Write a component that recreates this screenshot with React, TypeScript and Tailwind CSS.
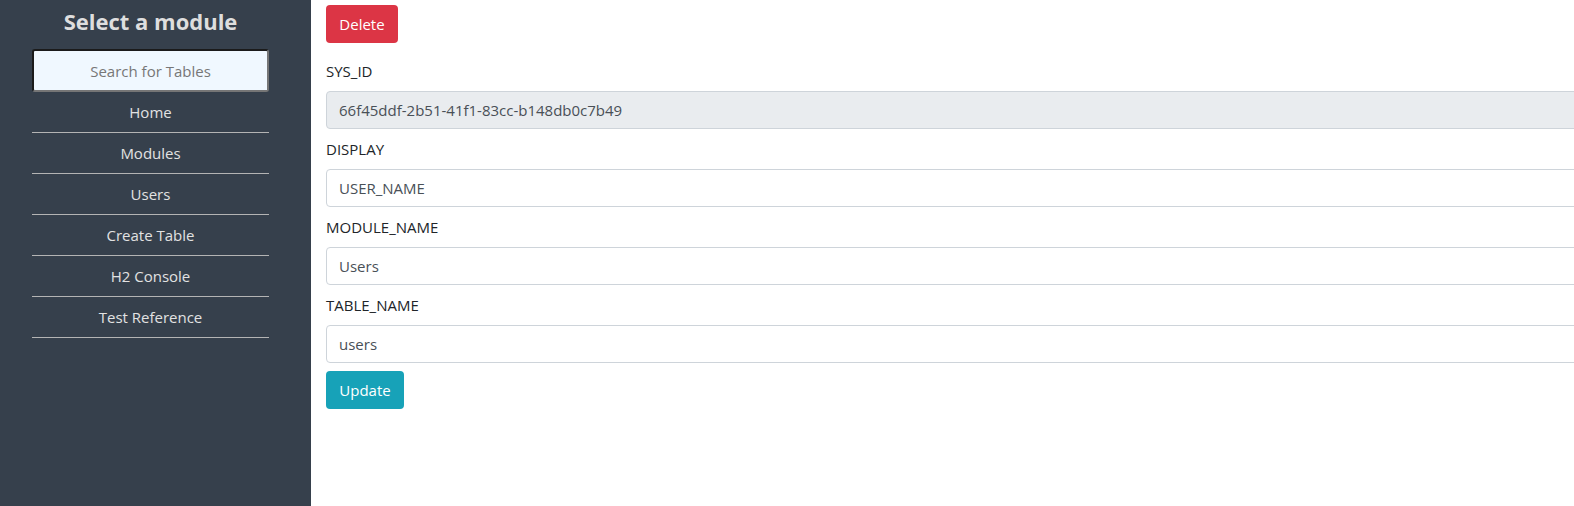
import React from "react";

const navItems = ["Home", "Modules", "Users", "Create Table", "H2 Console", "Test Reference"];

const fields: { label: string; value: string; disabled?: boolean }[] = [
  { label: "SYS_ID", value: "66f45ddf-2b51-41f1-83cc-b148db0c7b49", disabled: true },
  { label: "DISPLAY", value: "USER_NAME" },
  { label: "MODULE_NAME", value: "Users" },
  { label: "TABLE_NAME", value: "users" },
];

export default function App() {
  return (
    <div
      className="flex h-[506px] w-[1574px] overflow-hidden bg-white"
      style={{ fontFamily: '"Open Sans", "Noto Sans", Arial, sans-serif' }}
    >
      <aside className="flex h-full w-[311px] shrink-0 flex-col bg-[#36404c] pl-[32px] pt-[5px]">
        <div className="flex w-[237px] flex-col">
          <h3 className="text-center text-[22px] font-bold leading-[32px] text-[#dedede]">Select a module</h3>
          <input
            readOnly
            placeholder="Search for Tables"
            className="mt-[12px] h-[43px] w-full border-2 border-t-[#1b1b1b] border-l-[#1b1b1b] border-r-[#767676] border-b-[#767676] rounded-[3px] bg-[#f0f8ff] text-center text-[15px] text-[#495057] placeholder:text-[#777]"
          />
          <ul>
            {navItems.map((n) => (
              <li
                key={n}
                className="flex h-[41px] items-center justify-center border-b border-[#b4b4b4] pt-[1px] text-[15px] text-[#e2e2e2]"
              >
                {n}
              </li>
            ))}
          </ul>
        </div>
      </aside>
      <main className="flex min-w-0 flex-1 flex-col pl-[15px] pt-[5px]">
        <div>
          <button className="h-[38px] w-[72px] rounded-[4px] bg-[#dc3545] text-[15px] text-white">Delete</button>
        </div>
        <form className="mt-[16px] flex w-[1400px] flex-col">
          {fields.map((f) => (
            <div key={f.label} className="mb-[8px] flex flex-col">
              <label className="mb-[8px] text-[15px] leading-[24px] text-[#212529]">{f.label}</label>
              <input
                readOnly
                value={f.value}
                disabled={f.disabled}
                className={
                  "h-[38px] w-full rounded-[4px] border border-[#ced4da] px-[12px] text-[15px] text-[#495057] " +
                  (f.disabled ? "bg-[#e9ecef]" : "bg-white")
                }
              />
            </div>
          ))}
          <div>
            <button type="button" className="h-[38px] w-[78px] rounded-[4px] bg-[#17a2b8] text-[15px] text-white">
              Update
            </button>
          </div>
        </form>
      </main>
    </div>
  );
}
